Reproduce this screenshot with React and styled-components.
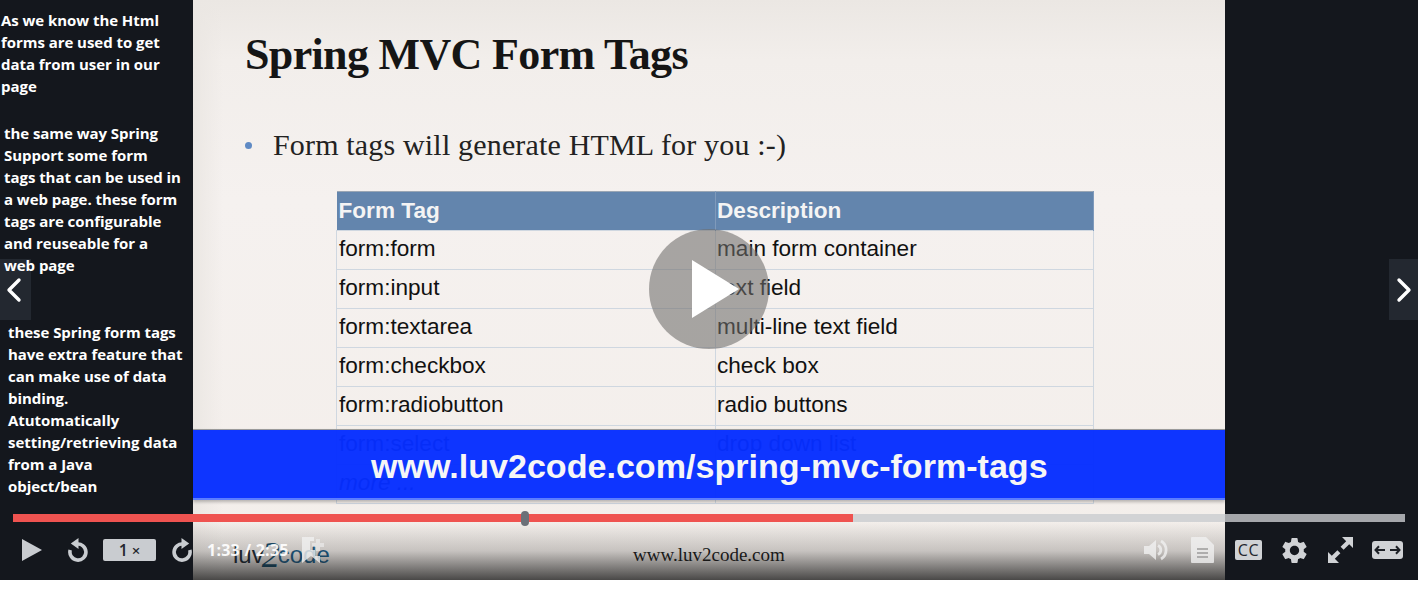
import React from "react";
import styled, { createGlobalStyle } from "styled-components";
import { MdSettings } from "react-icons/md";

const Global = createGlobalStyle`
  html, body { margin: 0; padding: 0; background: #fff; }
  * { box-sizing: border-box; }
`;

const Player = styled.div`
  position: relative;
  width: 1418px;
  height: 580px;
  display: grid;
  grid-template-columns: 193px 1032px 193px;
  background: #14171d;
  overflow: hidden;
`;

const Notes = styled.aside`
  position: relative;
  z-index: 1;
  padding-top: 9px;
  display: flex;
  flex-direction: column;
  font: 700 15px/22px "Open Sans", sans-serif;
  letter-spacing: -0.05px;
  white-space: nowrap;
  color: #fff;
`;

const Note = styled.p`
  margin: 0 0 ${(p) => p.$gap}px;
  padding-left: ${(p) => p.$indent}px;
`;

const Slide = styled.section`
  position: relative;
  overflow: hidden;
  padding: 28px 0 0 52px;
  background:
    linear-gradient(90deg, #ebe7e3 0, rgba(235, 231, 227, 0) 30px),
    linear-gradient(180deg, #ebe7e3 0, #f2eeeb 60px, #f5f1ef 200px, #f3eeea 100%);
`;

const Title = styled.h1`
  margin: 0;
  font: 700 44px/54px "Liberation Serif", serif;
  letter-spacing: -0.65px;
  color: #151515;
`;

const Bullet = styled.div`
  margin-top: 36px;
  display: flex;
  align-items: center;
  gap: 21px;
  font: 400 30px/54px "Liberation Serif", serif;
  letter-spacing: 0.17px;
  color: #222;
  &::before {
    content: "";
    width: 7px;
    height: 7px;
    border-radius: 50%;
    background: #5f8ac4;
  }
`;

const Table = styled.table`
  margin: 19px 0 0 91px;
  width: 758px;
  table-layout: fixed;
  border-collapse: collapse;
  font: 400 22.6px/26px "Liberation Sans", sans-serif;
  color: #111;
`;

const HeadCell = styled.th`
  height: 39px;
  padding: 0 2px;
  text-align: left;
  font-weight: 700;
  color: #f4f4f4;
  background: #6385ad;
  border-top: 1px solid #9aa6b4;
  border-right: 1px solid #7f9abb;
  &:first-child { width: 379px; padding-right: 0; }
  &:last-child { padding-left: 1px; }
`;

const Cell = styled.td`
  height: 39px;
  padding: 0 2px 2px;
  border: 1px solid #cfd7e0;
  font-style: ${(p) => (p.$more ? "italic" : "normal")};
  &:last-child { padding-left: 1px; }
`;

const Footer = styled.div`
  position: absolute;
  left: 0;
  right: 0;
  bottom: 10px;
  display: flex;
  align-items: center;
  padding-left: 40px;
`;

const Logo = styled.div`
  width: 400px;
  display: flex;
  align-items: center;
  font: 400 24px/30px "Liberation Sans", sans-serif;
  color: #1b2a35;
`;

const LogoTwo = styled.span`
  margin: 0 -2px;
  font: italic 400 36px/30px "Liberation Serif", serif;
  color: #16506f;
`;

const LogoCode = styled.span`
  color: #1d5f8a;
`;

const Site = styled.div`
  font: 400 19px/22px "Liberation Serif", serif;
  color: #1a1a1a;
`;

const Scrim = styled.div`
  position: absolute;
  left: 0;
  right: 0;
  bottom: 0;
  height: 58px;
  background: linear-gradient(180deg, rgba(20, 20, 20, 0) 0, rgba(20, 20, 20, 0.2) 50%, rgba(20, 20, 20, 0.76) 100%);
`;

const Banner = styled.div`
  position: absolute;
  left: 193px;
  right: 193px;
  top: 429px;
  height: 71px;
  display: flex;
  align-items: center;
  padding: 3px 0 0 178px;
  background: rgba(6, 46, 255, 0.97);
  border-top: 1px solid #9a9a9a;
  border-bottom: 2px solid #5c7dff;
  box-shadow: 0 2px 3px rgba(0, 0, 0, 0.25);
  font: 700 34.1px/40px "Liberation Sans", sans-serif;
  color: #f6f6f6;
`;

const BigPlay = styled.div`
  position: absolute;
  left: 649px;
  top: 229px;
  width: 120px;
  height: 120px;
  border-radius: 50%;
  background: rgba(110, 108, 106, 0.58);
  display: flex;
  align-items: center;
  justify-content: center;
`;

const NavArrow = styled.div`
  position: absolute;
  top: 259px;
  ${(p) => (p.$side === "left" ? "left: 0; padding-right: 3px;" : "right: 0;")}
  width: ${(p) => (p.$side === "left" ? 31 : 29)}px;
  height: 61px;
  background: #232830;
  display: flex;
  align-items: center;
  justify-content: center;
`;

const Progress = styled.div`
  position: absolute;
  left: 13px;
  top: 514px;
  width: 1392px;
  height: 8px;
  background: rgba(201, 204, 208, 0.8);
`;

const Played = styled.div`
  height: 100%;
  background: #ef5350;
`;

const Handle = styled.div`
  position: absolute;
  left: 508px;
  top: -3px;
  width: 8px;
  height: 15px;
  border-radius: 4px;
  background: #6b7078;
`;

const Controls = styled.div`
  position: absolute;
  left: 0;
  right: 0;
  top: 537px;
  height: 26px;
  padding: 0 15px 0 22px;
  display: flex;
  align-items: center;
  justify-content: space-between;
  color: #c9ccd0;
`;

const Group = styled.div`
  display: flex;
  align-items: center;
`;

const Slot = styled.div`
  display: flex;
  margin-left: ${(p) => p.$left || 0}px;
  color: ${(p) => (p.$pale ? "rgba(240, 240, 240, 0.8)" : "inherit")};
`;

const Speed = styled.div`
  width: 53px;
  height: 22px;
  border-radius: 2px;
  background: #c9ccd0;
  color: #24272d;
  display: flex;
  align-items: baseline;
  justify-content: center;
  gap: 4px;
  font: 600 16px/23px "Open Sans", sans-serif;
  small { font-size: 15px; font-weight: 600; }
`;

const Time = styled.div`
  font: 700 16px/20px "Open Sans", sans-serif;
  letter-spacing: 0.25px;
  color: #fff;
  white-space: nowrap;
  opacity: 0.92;
`;

const Caption = styled.div`
  width: 27px;
  height: 20px;
  border-radius: 2px;
  background: #d0d2d5;
  color: #23262c;
  display: flex;
  align-items: center;
  justify-content: center;
  letter-spacing: 0.6px;
  font: 400 16px/20px "Open Sans", sans-serif;
`;

const Gear = styled(MdSettings)`
  margin: -3px;
  width: 31px;
  height: 31px;
  color: #d0d2d5;
`;

const Chevron = ({ flip }) => (
  <svg width="16" height="26" viewBox="0 0 16 26" fill="none">
    <path
      d={flip ? "M3 3l10 10-10 10" : "M13 3L3 13l10 10"}
      stroke="#fff"
      strokeWidth="3.4"
      strokeLinecap="round"
      strokeLinejoin="round"
    />
  </svg>
);

const Turn = ({ flip }) => (
  <svg width="20" height="24" viewBox="0 0 20 24" fill="none" style={{ transform: flip ? "scaleX(-1)" : "none" }}>
    <path d="M8.500 6.200A8 8 0 1 1 2.200 12" stroke="currentColor" strokeWidth="3.600" />
    <path d="M10.500 0v11L2.800 5.500z" fill="currentColor" />
  </svg>
);

const rows = [
  ["form:form", "main form container"],
  ["form:input", "text field"],
  ["form:textarea", "multi-line text field"],
  ["form:checkbox", "check box"],
  ["form:radiobutton", "radio buttons"],
  ["form:select", "drop down list"],
];

export default function App() {
  return (
    <>
      <Global />
      <Player>
        <Notes>
          <Note $indent={1} $gap={25}>
            As we know the Html
            <br />
            forms are used to get
            <br />
            data from user in our
            <br />
            page
          </Note>
          <Note $indent={4} $gap={45}>
            the same way Spring
            <br />
            Support some form
            <br />
            tags that can be used in
            <br />a web page. these form
            <br />
            tags are configurable
            <br />
            and reuseable for a
            <br />
            web page
          </Note>
          <Note $indent={8} $gap={0}>
            these Spring form tags
            <br />
            have extra feature that
            <br />
            can make use of data
            <br />
            binding.
            <br />
            Atutomatically
            <br />
            setting/retrieving data
            <br />
            from a Java
            <br />
            object/bean
          </Note>
        </Notes>
        <Slide>
          <Title>Spring MVC Form Tags</Title>
          <Bullet>Form tags will generate HTML for you :-)</Bullet>
          <Table>
            <thead>
              <tr>
                <HeadCell>Form Tag</HeadCell>
                <HeadCell>Description</HeadCell>
              </tr>
            </thead>
            <tbody>
              {rows.map(([tag, text]) => (
                <tr key={tag}>
                  <Cell>{tag}</Cell>
                  <Cell>{text}</Cell>
                </tr>
              ))}
              <tr>
                <Cell $more>more ...</Cell>
                <Cell />
              </tr>
            </tbody>
          </Table>
          <Footer>
            <Logo>
              luv<LogoTwo>2</LogoTwo>
              <LogoCode>code</LogoCode>
            </Logo>
            <Site>www.luv2code.com</Site>
          </Footer>
          <Scrim />
        </Slide>
        <div />

        <Banner>www.luv2code.com/spring-mvc-form-tags</Banner>
        <BigPlay>
          <svg width="60" height="60" viewBox="0 0 60 60">
            <path d="M13 1l47 29-47 29z" fill="#fff" />
          </svg>
        </BigPlay>
        <NavArrow $side="left">
          <Chevron />
        </NavArrow>
        <NavArrow $side="right">
          <Chevron flip />
        </NavArrow>

        <Progress>
          <Played style={{ width: 840 }} />
          <Handle />
        </Progress>

        <Controls>
          <Group>
            <Slot>
              <svg width="20" height="24" viewBox="0 0 20 24">
                <path d="M0 1l20 11L0 23z" fill="currentColor" />
              </svg>
            </Slot>
            <Slot $left={26}>
              <Turn />
            </Slot>
            <Slot $left={15}>
              <Speed>
                1<small>×</small>
              </Speed>
            </Slot>
            <Slot $left={16}>
              <Turn flip />
            </Slot>
            <Slot $left={15}>
              <Time>1:33 / 2:35</Time>
            </Slot>
            <Slot $left={13} $pale>
              <svg width="24" height="26" viewBox="0 0 24 26">
                <path d="M0 0h12v4H8v9h5v6h5v7L9 19l-9 7z" fill="currentColor" />
                <path d="M14 2h4v4h4v4h-4v4h-4v-4h-4V6h4z" fill="currentColor" opacity="0.75" />
              </svg>
            </Slot>
          </Group>
          <Group>
            <Slot $pale>
              <svg width="24" height="22" viewBox="0 0 24 22" fill="none">
                <path d="M0 7h5l7-6v20l-7-6H0z" fill="currentColor" />
                <path d="M14 6.500a5 5 0 0 1 0 9M17 2a10.500 10.500 0 0 1 0 18" stroke="currentColor" strokeWidth="2.800" />
              </svg>
            </Slot>
            <Slot $left={23} $pale>
              <svg width="23" height="26" viewBox="0 0 23 26">
                <path d="M1 0h14l8 8v17a1 1 0 0 1-1 1H1a1 1 0 0 1-1-1V1a1 1 0 0 1 1-1z" fill="currentColor" />
                <path d="M6 12h11M6 16h11M6 20h11" stroke="#9c9b9a" strokeWidth="1.600" />
              </svg>
            </Slot>
            <Slot $left={21}>
              <Caption>CC</Caption>
            </Slot>
            <Slot $left={20}>
              <Gear />
            </Slot>
            <Slot $left={21}>
              <svg width="25" height="26" viewBox="0 0 25 26" color="#d0d2d5">
                <path d="M14 0h11v11l-3.800-3.800-5.600 5.600-3-3 5.600-5.600zM11 26H0V15l3.800 3.800 5.600-5.600 3 3-5.600 5.600z" fill="currentColor" />
              </svg>
            </Slot>
            <Slot $left={19}>
              <svg width="31" height="26" viewBox="0 0 31 26" fill="none">
                <rect y="4" width="31" height="18" rx="3" fill="#d0d2d5" />
                <path d="M3.500 13h9.500M7 9.300L3.500 13 7 16.700M18 13h9.500M24 9.300l3.500 3.700-3.500 3.700" stroke="#1c1f25" strokeWidth="2" />
              </svg>
            </Slot>
          </Group>
        </Controls>
      </Player>
    </>
  );
}
